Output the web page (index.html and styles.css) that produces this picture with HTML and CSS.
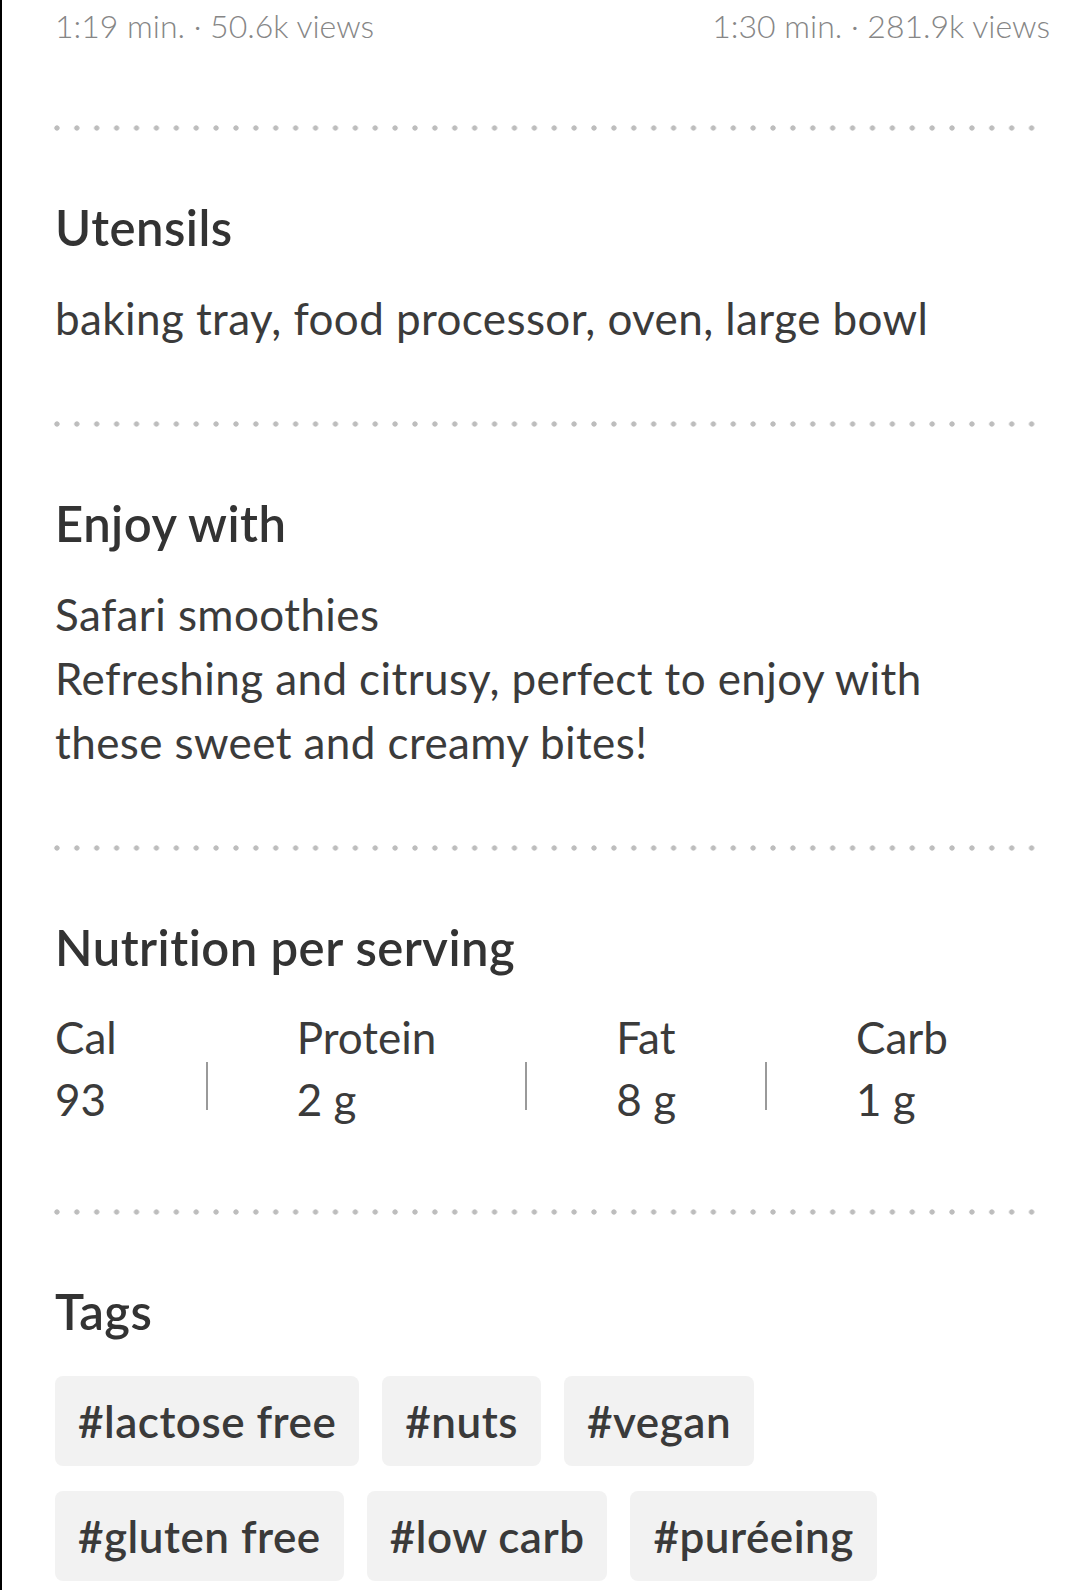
FILE: index.html
```html
<!DOCTYPE html>
<html lang="en">
<head>
<meta charset="utf-8">
<title>Recipe details</title>
<link rel="stylesheet" href="styles.css">
</head>
<body>
<div class="page">
  <div class="meta-row">
    <span class="meta">1:19 min. · 50.6k views</span>
    <span class="meta">1:30 min. · 281.9k views</span>
  </div>

  <div class="divider"></div>

  <section class="section">
    <h2 class="heading">Utensils</h2>
    <p class="body-text">baking tray, food processor, oven, large bowl</p>
  </section>

  <div class="divider"></div>

  <section class="section">
    <h2 class="heading">Enjoy with</h2>
    <p class="body-text">Safari smoothies<br>Refreshing and citrusy, perfect to enjoy with<br>these sweet and creamy bites!</p>
  </section>

  <div class="divider"></div>

  <section class="section nutrition-section">
    <h2 class="heading">Nutrition per serving</h2>
    <div class="nutrition">
      <div class="nutrient"><span>Cal</span><span>93</span></div>
      <div class="sep"></div>
      <div class="nutrient"><span>Protein</span><span>2 g</span></div>
      <div class="sep"></div>
      <div class="nutrient"><span>Fat</span><span>8 g</span></div>
      <div class="sep"></div>
      <div class="nutrient"><span>Carb</span><span>1 g</span></div>
    </div>
  </section>

  <div class="divider"></div>

  <section class="section">
    <h2 class="heading">Tags</h2>
    <div class="tags">
      <span class="tag">#lactose free</span>
      <span class="tag">#nuts</span>
      <span class="tag">#vegan</span>
      <span class="tag">#gluten free</span>
      <span class="tag">#low carb</span>
      <span class="tag">#puréeing</span>
    </div>
  </section>
</div>
</body>
</html>
```

FILE: styles.css
```css
html, body {
  margin: 0;
  padding: 0;
  background: #ffffff;
}

body {
  font-family: Lato, "Open Sans", "DejaVu Sans", sans-serif;
  color: #3a3a3a;
  font-variant-ligatures: none;
}

.page {
  border-left: 2px solid #000;
  min-height: 1590px;
  box-sizing: border-box;
  padding: 6px 34px 0 53px;
  overflow: hidden;
}

.meta-row {
  display: flex;
  justify-content: space-between;
}

.meta {
  font-size: 32px;
  line-height: 40px;
  font-weight: 300;
  color: #868686;
}

.divider {
  height: 10px;
  margin: 77px 0 0 -8px;
  width: 995px;
  background-image: radial-gradient(circle, #bdbdbd 0, #bdbdbd 2.3px, rgba(189,189,189,0) 3px);
  background-size: 19.9px 10px;
  background-repeat: repeat-x;
}

.section {
  padding-top: 64px;
}

.heading {
  margin: 0;
  font-size: 49px;
  line-height: 60px;
  font-weight: 600;
  letter-spacing: 0.5px;
  color: #333333;
}

.body-text {
  margin: 29px 0 0;
  font-size: 44px;
  line-height: 64px;
  font-weight: 400;
  letter-spacing: 0.4px;
  color: #3b3b3b;
}

.section + .divider {
  margin-top: 69px;
}

.nutrition-section + .divider {
  margin-top: 77px;
}

.nutrition {
  margin-top: 29px;
  display: flex;
  column-gap: 89px;
  font-size: 44px;
  line-height: 62px;
  color: #3b3b3b;
}

.nutrient {
  display: flex;
  flex-direction: column;
}

.sep {
  align-self: flex-end;
  width: 2px;
  height: 48px;
  margin-bottom: 20px;
  background: #9a9a9a;
}

.tags {
  margin-top: 35px;
  display: flex;
  flex-wrap: wrap;
  column-gap: 23px;
  row-gap: 25px;
  max-width: 860px;
}

.tag {
  background: #f2f2f2;
  border-radius: 8px;
  padding: 18px 23px;
  font-size: 44px;
  line-height: 54px;
  font-weight: 600;
  letter-spacing: 0.5px;
  color: #3a3a3a;
}
```
